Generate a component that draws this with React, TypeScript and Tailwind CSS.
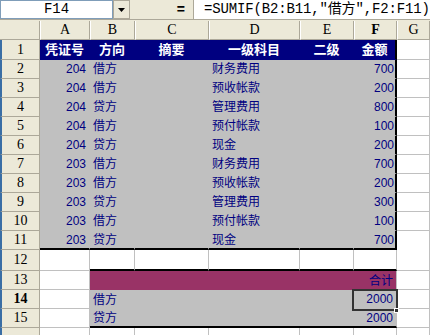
import React from "react";

const data: [string, string, string, string][] = [
  ["204", "借方", "财务费用", "700"],
  ["204", "借方", "预收帐款", "200"],
  ["204", "贷方", "管理费用", "800"],
  ["204", "借方", "预付帐款", "100"],
  ["204", "贷方", "现金", "200"],
  ["203", "借方", "财务费用", "700"],
  ["203", "借方", "预收帐款", "200"],
  ["203", "贷方", "管理费用", "300"],
  ["203", "借方", "预付帐款", "100"],
  ["203", "贷方", "现金", "700"],
];

const rowHead =
  "flex items-center justify-center bg-[#ece9d8] border-l-2 border-l-[#3a6ea5] border-r border-b border-r-[#aca899] border-b-[#aca899] text-black font-['Liberation_Serif',serif] text-[14px] leading-none";
const txt = "font-['Liberation_Sans','Noto_Sans_CJK_SC',sans-serif] text-[12px] leading-none text-[#000080]";
const white = "border-r border-b border-[#c0c0c0] bg-white";
const gray = "border-r border-b border-[#c0c0c0] bg-[#c0c0c0]";

function Row({ h, children }: { h: string; children: React.ReactNode }) {
  return <div className={`grid grid-cols-[40px_50px_45px_74px_91px_54px_43px_1fr] ${h}`}>{children}</div>;
}

export default function App() {
  return (
    <div className="w-[430px] h-[335px] overflow-hidden bg-white flex flex-col">
      {/* formula bar */}
      <div className="flex h-[20px] shrink-0 border-b border-[#aca899] bg-[#ece9d8]">
        <div className="w-[113px] bg-white border border-[#7f9db9] flex items-center justify-center font-['Liberation_Mono',monospace] text-[14px] text-black">
          F14
        </div>
        <div className="w-[17px] bg-[#ece9d8] border border-[#aca899] flex items-center justify-center">
          <svg width="7" height="4" viewBox="0 0 7 4">
            <path d="M0 0h7L3.5 4z" fill="#000" />
          </svg>
        </div>
        <div className="w-[63px] flex items-center justify-end pr-[8px] font-['Liberation_Sans',sans-serif] text-[14px] font-bold text-black">
          =
        </div>
        <div className="flex-1 bg-white border-l border-[#aca899] flex items-center pl-[10px] whitespace-nowrap font-['Liberation_Mono','Noto_Sans_CJK_SC',monospace] text-[14px] tracking-[-0.15px] text-black">
          =SUMIF(B2:B11,"借方",F2:F11)
        </div>
      </div>
      <div className="h-[1px] bg-[#ece9d8] shrink-0" />

      {/* column headers */}
      <Row h="h-[19px] shrink-0">
        <div className="bg-[#ece9d8] border-r border-b border-[#aca899]" />
        {["A", "B", "C", "D", "E", "F", "G"].map((c) => (
          <div
            key={c}
            className={`flex items-center justify-center bg-[#ece9d8] border-r border-b border-[#aca899] border-l border-l-white font-['Liberation_Serif',serif] text-[14px] leading-none text-black ${
              c === "F" ? "font-bold" : ""
            }`}
          >
            {c}
          </div>
        ))}
      </Row>

      {/* row 1 */}
      <Row h="h-[20px] shrink-0">
        <div className={rowHead}>1</div>
        {["凭证号", "方向", "摘要", "一级科目", "二级", "金额"].map((t, i) => (
          <div
            key={t}
            className={`flex items-center justify-center bg-[#000080] border-b border-[#000080] font-['Liberation_Sans','Noto_Sans_CJK_SC',sans-serif] text-[13px] font-bold leading-none text-white ${
              i === 5 ? "border-r-2 border-r-black" : "border-r"
            }`}
          >
            {t}
          </div>
        ))}
        <div className={white} />
      </Row>

      {data.map((r, i) => {
        const last = i === data.length - 1;
        const bb = last ? "border-b-2 border-b-black" : "border-b";
        return (
          <Row key={i} h="h-[19px] shrink-0">
            <div className={rowHead}>{i + 2}</div>
            <div className={`flex items-center justify-end pr-[3px] bg-[#c0c0c0] border-r border-[#c0c0c0] ${bb} ${txt}`}>{r[0]}</div>
            <div className={`flex items-center pl-[3px] bg-[#c0c0c0] border-r border-[#c0c0c0] ${bb} ${txt}`}>{r[1]}</div>
            <div className={`bg-[#c0c0c0] border-r border-[#c0c0c0] ${bb}`} />
            <div className={`flex items-center pl-[3px] bg-[#c0c0c0] border-r border-[#c0c0c0] ${bb} ${txt}`}>{r[2]}</div>
            <div className={`bg-[#c0c0c0] border-r border-[#c0c0c0] ${bb}`} />
            <div className={`flex items-center justify-end pr-[1px] bg-[#c0c0c0] border-r-2 border-r-black border-[#c0c0c0] ${bb} ${txt}`}>{r[3]}</div>
            <div className={last ? "bg-white border-r border-[#c0c0c0]" : white} />
          </Row>
        );
      })}

      {/* row 12 */}
      <Row h="h-[21px] shrink-0">
        <div className={rowHead}>12</div>
        <div className={white} />
        <div className="bg-white border-r border-[#c0c0c0] border-b-2 border-b-black" />
        <div className="bg-white border-r border-[#c0c0c0] border-b-2 border-b-black" />
        <div className="bg-white border-r border-[#c0c0c0] border-b-2 border-b-black" />
        <div className="bg-white border-r border-[#c0c0c0] border-b-2 border-b-black" />
        <div className="bg-white border-r border-[#c0c0c0] border-b-2 border-b-black" />
        <div className={white} />
      </Row>

      {/* row 13 */}
      <Row h="h-[19px] shrink-0">
        <div className={rowHead}>13</div>
        <div className={white} />
        <div className="bg-[#993366]" />
        <div className="bg-[#993366]" />
        <div className="bg-[#993366]" />
        <div className="bg-[#993366]" />
        <div className={`flex items-center justify-end pr-[3px] bg-[#993366] border-r border-[#c0c0c0] ${txt}`}>合计</div>
        <div className={white} />
      </Row>

      {/* row 14 */}
      <Row h="h-[19px] shrink-0">
        <div className={`${rowHead} font-bold`}>14</div>
        <div className={white} />
        <div className={`flex items-center pl-[3px] bg-[#c0c0c0] ${txt}`}>借方</div>
        <div className="bg-[#c0c0c0]" />
        <div className="bg-[#c0c0c0]" />
        <div className="bg-[#c0c0c0]" />
        <div className={`relative flex items-center justify-end pr-[3px] ${gray} ${txt}`}>
          2000
          <div className="absolute left-[-2px] top-[-1px] w-[46px] h-[22px] border-2 border-[#333333]" />
          <div className="absolute right-[-3px] bottom-[-5px] w-[5px] h-[5px] bg-[#333333] border border-white" />
        </div>
        <div className={white} />
      </Row>

      {/* row 15 */}
      <Row h="h-[19px] shrink-0">
        <div className={rowHead}>15</div>
        <div className={white} />
        <div className={`flex items-center pl-[3px] bg-[#c0c0c0] border-b-2 border-b-black ${txt}`}>贷方</div>
        <div className="bg-[#c0c0c0] border-b-2 border-b-black" />
        <div className="bg-[#c0c0c0] border-b-2 border-b-black" />
        <div className="bg-[#c0c0c0] border-b-2 border-b-black" />
        <div className={`flex items-center justify-end pr-[3px] bg-[#c0c0c0] border-r border-r-[#c0c0c0] border-b-2 border-b-black ${txt}`}>2000</div>
        <div className={white} />
      </Row>

      {/* row 16 (partially visible) */}
      <Row h="h-[19px] shrink-0">
        <div className={rowHead} />
        <div className={white} />
        <div className={white} />
        <div className={white} />
        <div className={white} />
        <div className={white} />
        <div className={white} />
        <div className={white} />
      </Row>
    </div>
  );
}
